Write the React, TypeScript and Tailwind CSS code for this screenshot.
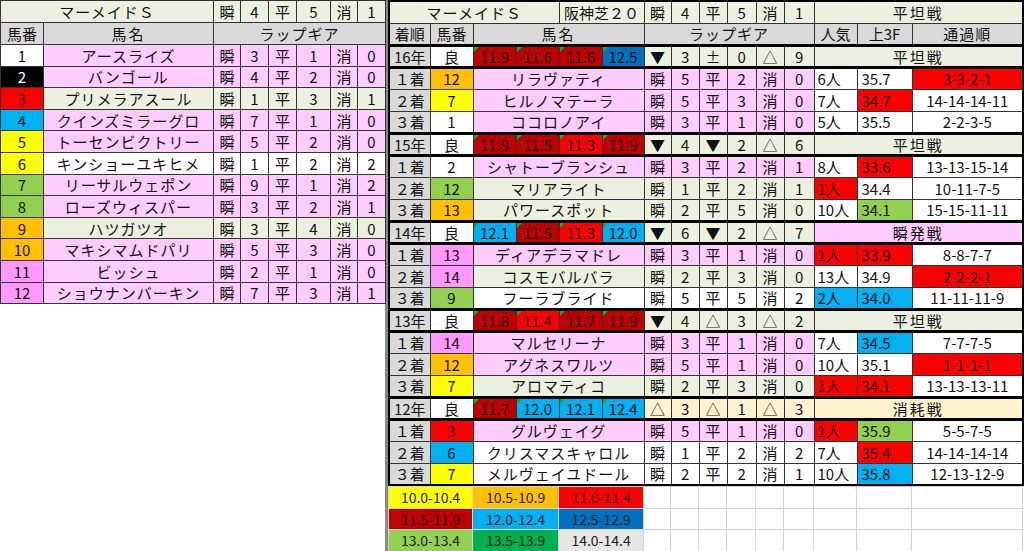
import React from "react";

const PINK = "bg-[#ffccff]";
const GREEN = "bg-[#ebf1de]";
const WHITE = "bg-white";
const BEIGE = "bg-[#fff2cc]";
const GREY = "bg-[#d9d9d9]";

const gate: Record<string, string> = {
  "1": "bg-white", "2": "bg-black text-white", "3": "bg-[#ff0000]", "4": "bg-[#00b0f0]",
  "5": "bg-[#ffff00]", "6": "bg-[#ffff00]", "7": "bg-[#92d050]", "8": "bg-[#92d050]",
  "9": "bg-[#ffc000]", "10": "bg-[#ffc000]", "11": "bg-[#ff99ff]", "12": "bg-[#ff99ff]",
};

const lapColor = (v: number) => {
  if (v < 10.5) return "bg-[#ffff00]";
  if (v < 11.0) return "bg-[#ffc000]";
  if (v < 11.5) return "bg-[#ff0000]";
  if (v < 12.0) return "bg-[#c00000]";
  if (v < 12.5) return "bg-[#00b0f0]";
  if (v < 13.0) return "bg-[#0070c0]";
  return "bg-[#92d050]";
};

const C = "border border-[#333] text-center whitespace-nowrap overflow-hidden p-0";

const leftRows: [string, string, string, number, number, number][] = [
  ["1", "アースライズ", PINK, 3, 1, 0],
  ["2", "バンゴール", PINK, 4, 2, 0],
  ["3", "プリメラアスール", GREEN, 1, 3, 1],
  ["4", "クインズミラーグロ", PINK, 7, 1, 0],
  ["5", "トーセンビクトリー", PINK, 5, 2, 0],
  ["6", "キンショーユキヒメ", WHITE, 1, 2, 2],
  ["7", "リーサルウェポン", PINK, 9, 1, 2],
  ["8", "ローズウィスパー", PINK, 3, 2, 1],
  ["9", "ハツガツオ", GREEN, 3, 4, 0],
  ["10", "マキシマムドパリ", PINK, 5, 3, 0],
  ["11", "ビッシュ", PINK, 2, 1, 0],
  ["12", "ショウナンバーキン", PINK, 7, 3, 1],
];

type R = [string, string, string, string, number, number, number, string, string, string, string, string, string];
type Y = { y: string; laps: number[]; g: [string, number][]; type: string; bg: string; tbg: string; rows: R[] };
const RED = "bg-[#ff0000]", BLUE = "bg-[#00b0f0]", LG = "bg-[#92d050]";
const OR = "bg-[#ffc000]", YE = "bg-[#ffff00]", PK = "bg-[#ff99ff]";
const years: Y[] = [
  { y: "16年", laps: [11.9, 11.6, 11.6, 12.5], g: [["▼", 3], ["±", 0], ["△", 9]], type: "平坦戦", bg: GREEN, tbg: GREEN, rows: [
    ["１着", "12", OR, PINK, 5, 2, 0, "6人", WHITE, "35.7", WHITE, "3-3-2-1", RED],
    ["２着", "7", YE, PINK, 5, 3, 0, "7人", WHITE, "34.7", RED, "14-14-14-11", WHITE],
    ["３着", "1", WHITE, PINK, 3, 1, 0, "5人", WHITE, "35.5", WHITE, "2-2-3-5", WHITE],
  ]},
  { y: "15年", laps: [11.9, 11.5, 11.3, 11.9], g: [["▼", 4], ["▼", 2], ["△", 6]], type: "平坦戦", bg: GREEN, tbg: GREEN, rows: [
    ["１着", "2", WHITE, PINK, 3, 2, 1, "8人", WHITE, "33.6", RED, "13-13-15-14", WHITE],
    ["２着", "12", LG, GREEN, 1, 2, 1, "1人", RED, "34.4", WHITE, "10-11-7-5", WHITE],
    ["３着", "13", OR, GREEN, 2, 5, 0, "10人", WHITE, "34.1", LG, "15-15-11-11", WHITE],
  ]},
  { y: "14年", laps: [12.1, 11.5, 11.3, 12.0], g: [["▼", 6], ["▼", 2], ["△", 7]], type: "瞬発戦", bg: GREEN, tbg: PINK, rows: [
    ["１着", "13", PK, PINK, 3, 1, 0, "1人", RED, "33.9", RED, "8-8-7-7", WHITE],
    ["２着", "14", PK, GREEN, 2, 3, 0, "13人", WHITE, "34.9", WHITE, "2-2-2-1", RED],
    ["３着", "9", LG, WHITE, 5, 5, 2, "2人", BLUE, "34.0", BLUE, "11-11-11-9", WHITE],
  ]},
  { y: "13年", laps: [11.8, 11.4, 11.7, 11.9], g: [["▼", 4], ["△", 3], ["△", 2]], type: "平坦戦", bg: GREEN, tbg: GREEN, rows: [
    ["１着", "14", PK, PINK, 3, 1, 0, "7人", WHITE, "34.5", BLUE, "7-7-7-5", WHITE],
    ["２着", "12", OR, PINK, 5, 1, 0, "10人", WHITE, "35.1", WHITE, "1-1-1-1", RED],
    ["３着", "7", YE, GREEN, 2, 3, 0, "1人", RED, "34.1", RED, "13-13-13-11", WHITE],
  ]},
  { y: "12年", laps: [11.7, 12.0, 12.1, 12.4], g: [["△", 3], ["△", 1], ["△", 3]], type: "消耗戦", bg: BEIGE, tbg: BEIGE, rows: [
    ["１着", "3", RED, PINK, 5, 1, 0, "1人", RED, "35.9", LG, "5-5-7-5", WHITE],
    ["２着", "6", BLUE, WHITE, 1, 2, 2, "7人", WHITE, "35.4", RED, "14-14-14-14", WHITE],
    ["３着", "7", YE, WHITE, 2, 2, 1, "10人", WHITE, "35.8", BLUE, "12-13-12-9", WHITE],
  ]},
];

const NAMES: Record<string, string[]> = {
  "16年": ["リラヴァティ", "ヒルノマテーラ", "ココロノアイ"],
  "15年": ["シャトーブランシュ", "マリアライト", "パワースポット"],
  "14年": ["ディアデラマドレ", "コスモバルバラ", "フーラブライド"],
  "13年": ["マルセリーナ", "アグネスワルツ", "アロマティコ"],
  "12年": ["グルヴェイグ", "クリスマスキャロル", "メルヴェイユドール"],
};

const Tri = () => (
  <span className="absolute left-0 top-0 w-0 h-0 border-t-[5px] border-r-[5px] border-t-[#00b050] border-r-transparent" />
);

const rightW = [41, 43, 43, 43, 43, 42, 27, 28, 28, 29, 28, 30, 43, 55, 111];

export default function App() {
  return (
    <div className="w-[1024px] h-[551px] overflow-hidden bg-white text-[15px] text-[#111] flex" style={{ fontFamily: '"Noto Sans CJK JP", "Liberation Sans", sans-serif' }}>
      <div className="w-[388px] shrink-0 border-r-[3px] border-r-[#888]">
        <table className="border-collapse table-fixed w-[385px] leading-none">
          <colgroup>
            {[43, 170, 27, 28, 28, 34, 27, 28].map((w, i) => <col key={i} style={{ width: w }} />)}
          </colgroup>
          <tbody>
            <tr className="h-[22px]">
              <td colSpan={2} className={`${C} ${GREEN} tracking-[1px]`}>マーメイドＳ</td>
              <td className={`${C} ${GREEN}`}>瞬</td><td className={`${C} ${GREEN}`}>4</td>
              <td className={`${C} ${GREEN}`}>平</td><td className={`${C} ${GREEN}`}>5</td>
              <td className={`${C} ${GREEN}`}>消</td><td className={`${C} ${GREEN}`}>1</td>
            </tr>
            <tr className="h-[22px]">
              <td className={`${C} ${GREY}`}>馬番</td>
              <td className={`${C} ${GREY} tracking-[2px]`}>馬名</td>
              <td colSpan={6} className={`${C} ${GREY} tracking-[1px]`}>ラップギア</td>
            </tr>
            {leftRows.map(([n, name, bg, a, b, c]) => (
              <tr key={n} className="h-[21.6px]">
                <td className={`${C} ${gate[n]}`}>{n}</td>
                <td className={`${C} ${bg} tracking-[1px]`}>{name}</td>
                <td className={`${C} ${bg}`}>瞬</td><td className={`${C} ${bg}`}>{a}</td>
                <td className={`${C} ${bg}`}>平</td><td className={`${C} ${bg}`}>{b}</td>
                <td className={`${C} ${bg}`}>消</td><td className={`${C} ${bg}`}>{c}</td>
              </tr>
            ))}
          </tbody>
        </table>
      </div>
      <div className="flex-1">
        <table className="border-collapse table-fixed w-[634px] leading-none border-2 border-black">
          <colgroup>{rightW.map((w, i) => <col key={i} style={{ width: w }} />)}</colgroup>
          <tbody>
            <tr className="h-[22px]">
              <td colSpan={4} className={`${C} ${GREEN} tracking-[1px]`}>マーメイドＳ</td>
              <td colSpan={2} className={`${C} ${GREEN}`}>阪神芝２０</td>
              <td className={`${C} ${GREEN}`}>瞬</td><td className={`${C} ${GREEN}`}>4</td>
              <td className={`${C} ${GREEN}`}>平</td><td className={`${C} ${GREEN}`}>5</td>
              <td className={`${C} ${GREEN}`}>消</td><td className={`${C} ${GREEN}`}>1</td>
              <td colSpan={3} className={`${C} ${GREEN} tracking-[2px]`}>平坦戦</td>
            </tr>
            <tr className="h-[22px]">
              <td className={`${C} ${GREY}`}>着順</td>
              <td className={`${C} ${GREY}`}>馬番</td>
              <td colSpan={4} className={`${C} ${GREY} tracking-[2px]`}>馬名</td>
              <td colSpan={6} className={`${C} ${GREY} tracking-[1px]`}>ラップギア</td>
              <td className={`${C} ${GREY}`}>人気</td>
              <td className={`${C} ${GREY}`}>上3F</td>
              <td className={`${C} ${GREY} tracking-[1px]`}>通過順</td>
            </tr>
            {years.map((yr) => (
              <React.Fragment key={yr.y}>
                <tr className="h-[22px] border-t-[3px] border-t-black">
                  <td className={`${C} ${GREY}`}>{yr.y}</td>
                  <td className={`${C} ${WHITE}`}>良</td>
                  {yr.laps.map((v, i) => (
                    <td key={i} className={`${C} ${lapColor(v)} relative`}><Tri />{v.toFixed(1)}</td>
                  ))}
                  {yr.g.map(([s, n], i) => (
                    <React.Fragment key={i}>
                      <td className={`${C} ${yr.bg}`}>{s}</td>
                      <td className={`${C} ${yr.bg}`}>{n}</td>
                    </React.Fragment>
                  ))}
                  <td colSpan={3} className={`${C} ${yr.tbg} tracking-[2px]`}>{yr.type}</td>
                </tr>
                {yr.rows.map((r, i) => (
                  <tr key={i} className={`h-[22px] ${i === 0 ? "border-t-[3px] border-t-black" : ""}`}>
                    <td className={`${C} ${GREY}`}>{r[0]}</td>
                    <td className={`${C} ${r[2]}`}>{r[1]}</td>
                    <td colSpan={4} className={`${C} ${r[3]} tracking-[1px]`}>{NAMES[yr.y][i]}</td>
                    <td className={`${C} ${r[3]}`}>瞬</td><td className={`${C} ${r[3]}`}>{r[4]}</td>
                    <td className={`${C} ${r[3]}`}>平</td><td className={`${C} ${r[3]}`}>{r[5]}</td>
                    <td className={`${C} ${r[3]}`}>消</td><td className={`${C} ${r[3]}`}>{r[6]}</td>
                    <td className={`${C} ${r[8]} text-left pl-[3px]`}>{r[7]}</td>
                    <td className={`${C} ${r[10]} text-left pl-[4px]`}>{r[9]}</td>
                    <td className={`${C} ${r[12]}`}>{r[11]}</td>
                  </tr>
                ))}
              </React.Fragment>
            ))}
          </tbody>
        </table>
        <table className="border-collapse table-fixed w-[634px] leading-none">
          <colgroup>{rightW.map((w, i) => <col key={i} style={{ width: w }} />)}</colgroup>
          <tbody>
            {[
              [["10.0-10.4", "bg-[#ffff00]"], ["10.5-10.9", "bg-[#ffc000]"], ["11.0-11.4", "bg-[#ff0000]"]],
              [["11.5-11.9", "bg-[#c00000]"], ["12.0-12.4", "bg-[#00b0f0]"], ["12.5-12.9", "bg-[#0070c0]"]],
              [["13.0-13.4", "bg-[#92d050]"], ["13.5-13.9", "bg-[#00b050]"], ["14.0-14.4", "bg-[#e7e6e6]"]],
            ].map((row, ri) => (
              <tr key={ri} className="h-[21.5px]">
                {row.map(([t, bg]) => (
                  <td key={t} colSpan={2} className={`border border-[#d4d4d4] ${bg} text-center text-[14px] text-[#222] p-0`}>{t}</td>
                ))}
                {rightW.slice(6).map((_, i) => <td key={i} className="border border-[#d4d4d4] p-0" />)}
              </tr>
            ))}
          </tbody>
        </table>
      </div>
    </div>
  );
}
